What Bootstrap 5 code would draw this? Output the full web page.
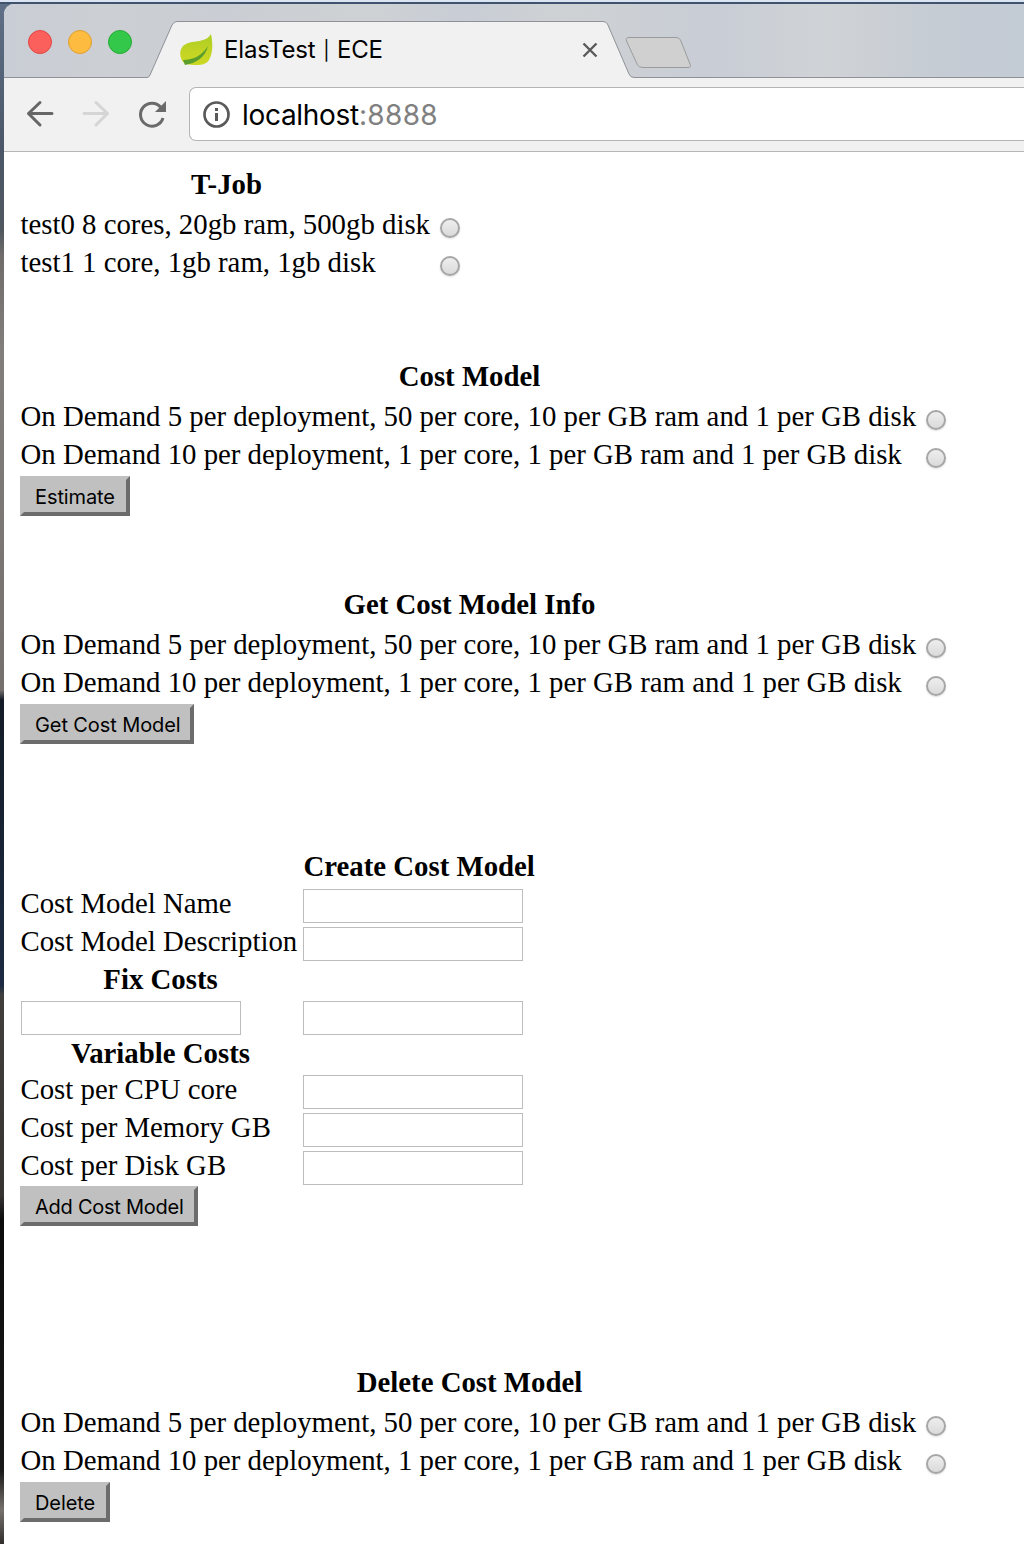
<!DOCTYPE html>
<html lang="en">
<head>
<meta charset="utf-8">
<title>ElasTest | ECE</title>
<link href="https://cdn.jsdelivr.net/npm/bootstrap@5.3.0/dist/css/bootstrap.min.css" rel="stylesheet">
<style>
body{width:1024px;height:1544px;overflow:hidden;color:#000;padding-left:4px;background:linear-gradient(#5f7088 0,#4b5768 150px,#50575f 230px,#6f6c6b 255px,#827e7c 350px,#75706d 690px,#131b26 700px,#1c2b43 985px,#403f3d 995px,#363433 1195px,#0c0c0c 1220px,#181818 1470px,#77716d 1510px,#302f2e 1544px)}
.desk-top{height:4px;margin-left:-4px;background:#dae4f2;border-bottom:2px solid #40536c}
.app-window{height:1540px;background:#fff;border-radius:10px 0 0 0;overflow:hidden}
.tab-strip{height:74px;background:linear-gradient(90deg,#c9cdd5 0,#cccfd3 100px,#cacdd3 220px,#cfd2d4 360px,#c8cdd6 460px,#cfd2d4 560px,#c8cdd6 710px,#d0d3d6 820px,#c6ccd4 930px,#c3cbd4 1020px)}
.tab-shape{left:0;top:0}
.lights{width:176px;padding-left:24px;gap:16px;padding-top:2px}
.light{width:24px;height:24px;border-radius:50%;border:1px solid}
.l-red{background:#fc605c;border-color:#df4744}
.l-yel{background:#fdbc40;border-color:#de9f34}
.l-grn{background:#34c84a;border-color:#27aa35}
.tab-content-row{padding-top:18px}
.tab-title{font:24px/30px Inter,sans-serif;letter-spacing:-.15px;margin-left:11px;width:358px}
.bar-sep{font-size:19px;padding:0 1px;vertical-align:1px}
.toolbar{height:74px;background:#f1f1f1;border-bottom:1px solid #b6b6b6}
.nav-icons{width:185px}
.omnibox{height:54px;background:#fff;border:1px solid #b5b5b5;border-right:0;border-radius:7px 0 0 7px;padding-left:12px;margin-top:-1px}
.address{font:28px/36px Inter,sans-serif;margin-left:12px;letter-spacing:-.3px;padding-top:2px}
.port{color:#808080;letter-spacing:.35px}
.page{padding:12px 0 0 16px;font-family:"Liberation Serif",serif;font-size:28.8px}
.w-job{width:444px}.w-model{width:930px}
.head-line{height:42px;line-height:41px;text-align:center;font-weight:700}
.w-job .head-line{width:413px}.w-model .head-line{width:899px}
.option{height:38px;line-height:37px;white-space:nowrap;padding-bottom:2px}
.option span,.cap-col{text-indent:.5px}
.form-check-input.pick{width:20px;height:20px;margin:7px 4px 0 0;border:2px solid #a6a6a6;background:linear-gradient(#eee,#dadada);box-shadow:0 1px 2px #ddd;flex:none}
.action{height:40px;border-style:solid;border-width:0 4px 4px 0;border-color:#6c6c6c;background:#c0c0c0;border-radius:0;padding:2px 0 0 15px;font:20px/38px Inter,sans-serif;letter-spacing:-.1px;color:#000;text-align:left;margin-top:2px;display:block;position:relative;white-space:nowrap}
.action::after{content:"";position:absolute;right:-4px;top:0;border-left:4px solid #c0c0c0;border-bottom:4px solid transparent}
.action::before{content:"";position:absolute;left:0;bottom:-4px;border-top:4px solid #c0c0c0;border-right:4px solid transparent}
.b-est{width:110px}.b-get{width:174px}.b-add{width:178px;margin-top:-1px;letter-spacing:-.25px}.b-del{width:90px}
.sec-model{margin-top:74px}.sec-info{margin-top:68px}.sec-create{margin-top:104px}.sec-del{margin-top:136px}
.field-row{height:38px;line-height:32px;white-space:nowrap}
.cap-col{width:283px;flex:none}
.sub-head{height:36px;line-height:32px;width:281px;text-align:center;font-weight:700}
.create-head{height:39px;line-height:36px;margin-left:283.5px;font-weight:700}
.form-control.entry{width:220px;height:34px;border:1px solid #bdbdbd;border-radius:0;padding:2px;margin-top:2px}
.cap-col .entry{margin-left:1px}
</style>
<script src="https://cdn.jsdelivr.net/npm/bootstrap@5.3.0/dist/js/bootstrap.bundle.min.js"></script>
</head>
<body>
<div class="desk-top"></div>
<div class="app-window">
  <header>
    <div class="tab-strip position-relative">
      <svg class="tab-shape position-absolute" width="1020" height="74" fill="none">
        <path d="M0 74V73.500H143Q145 73.500 146 71L168 21Q170 17.500 173 17.500H599Q602 17.500 603.500 20L625 70Q626.500 73.500 630 73.500H1020V74Z" fill="#f1f1f1"/>
        <path d="M0 73.500H143Q145 73.500 146 71L168 21Q170 17.500 173 17.500H599Q602 17.500 603.500 20L625 70Q626.500 73.500 630 73.500H1020" stroke="#8e9196"/>
        <path d="M625 33.500H672Q675 33.500 676.500 36L686 60Q687.500 63.500 684 63.500H639Q635 63.500 633.500 61L622.500 37Q621 33.500 625 33.500Z" fill="#d0d0d0" stroke="#999b9d"/>
      </svg>
      <div class="d-flex position-relative h-100">
        <div class="lights d-flex align-items-center h-100"><span class="light l-red"></span><span class="light l-yel"></span><span class="light l-grn"></span></div>
        <div class="tab-content-row d-flex align-items-center h-100">
          <svg width="33" height="32" viewBox="0 0 33 32">
            <defs><linearGradient id="leaf" x2="0" y2="1"><stop stop-color="#a9ce24"/><stop offset=".6" stop-color="#c4d424"/><stop offset="1" stop-color="#cbd822"/></linearGradient></defs>
            <path d="M31 0C33 9 33 19 29 26C25 33 13 31 5 30C-2 24-1 13 6 10C14 6 26 9 31 0Z" fill="url(#leaf)"/>
            <path d="M28 12C22 21 14 26 3 26L5 31C16 29 25 24 28 12Z" fill="#5c9e2b"/>
          </svg>
          <div class="tab-title">ElasTest <span class="bar-sep">|</span> ECE</div>
          <svg width="16" height="16" viewBox="0 0 16 16" stroke="#5a5a5a" stroke-width="2.400"><path d="M1.500 1.500L14.500 14.500M14.500 1.500L1.500 14.500"/></svg>
        </div>
      </div>
    </div>
    <div class="toolbar d-flex align-items-center">
      <svg class="nav-icons flex-shrink-0" height="74" viewBox="0 0 185 74" fill="none" stroke-width="3" stroke-linecap="round" stroke-linejoin="round">
        <path d="M48 35.500H24.500M36 24.500L24.500 35.500L36 47" stroke="#666"/>
        <path d="M80 35.500H103.500M92 24.500L103.500 35.500L92 47" stroke="#d5d5d5"/>
        <path d="M157 29.500A11.500 11.500 0 1 0 159 40" stroke="#6a6a6a" stroke-linecap="butt"/>
        <path d="M162 23V34H151Z" fill="#6a6a6a"/>
      </svg>
      <div class="omnibox d-flex align-items-center flex-grow-1">
        <svg width="28" height="28" viewBox="0 0 28 28"><circle cx="14.500" cy="14.500" r="12" fill="none" stroke="#5a5a5a" stroke-width="2.700"/><path d="M13 8h3v3h-3zM13 13h3v8h-3z" fill="#5a5a5a"/></svg>
        <div class="address">localhost<span class="port">:8888</span></div>
      </div>
    </div>
  </header>
  <main class="page">
    <section class="w-job">
      <div class="head-line">T-Job</div>
      <label class="option d-flex justify-content-between align-items-center"><span>test0 8 cores, 20gb ram, 500gb disk</span><input class="form-check-input pick" type="radio" name="job"></label>
      <label class="option d-flex justify-content-between align-items-center"><span>test1 1 core, 1gb ram, 1gb disk</span><input class="form-check-input pick" type="radio" name="job"></label>
    </section>
    <section class="w-model sec-model">
      <div class="head-line">Cost Model</div>
      <label class="option d-flex justify-content-between align-items-center"><span>On Demand 5 per deployment, 50 per core, 10 per GB ram and 1 per GB disk</span><input class="form-check-input pick" type="radio" name="model"></label>
      <label class="option d-flex justify-content-between align-items-center"><span>On Demand 10 per deployment, 1 per core, 1 per GB ram and 1 per GB disk</span><input class="form-check-input pick" type="radio" name="model"></label>
      <button class="btn action b-est">Estimate</button>
    </section>
    <section class="w-model sec-info">
      <div class="head-line">Get Cost Model Info</div>
      <label class="option d-flex justify-content-between align-items-center"><span>On Demand 5 per deployment, 50 per core, 10 per GB ram and 1 per GB disk</span><input class="form-check-input pick" type="radio" name="info"></label>
      <label class="option d-flex justify-content-between align-items-center"><span>On Demand 10 per deployment, 1 per core, 1 per GB ram and 1 per GB disk</span><input class="form-check-input pick" type="radio" name="info"></label>
      <button class="btn action b-get">Get Cost Model</button>
    </section>
    <section class="sec-create">
      <div class="create-head">Create Cost Model</div>
      <div class="field-row d-flex"><div class="cap-col">Cost Model Name</div><input class="form-control entry"></div>
      <div class="field-row d-flex"><div class="cap-col">Cost Model Description</div><input class="form-control entry"></div>
      <div class="sub-head">Fix Costs</div>
      <div class="field-row d-flex"><div class="cap-col"><input class="form-control entry"></div><input class="form-control entry"></div>
      <div class="sub-head">Variable Costs</div>
      <div class="field-row d-flex"><div class="cap-col">Cost per CPU core</div><input class="form-control entry"></div>
      <div class="field-row d-flex"><div class="cap-col">Cost per Memory GB</div><input class="form-control entry"></div>
      <div class="field-row d-flex"><div class="cap-col">Cost per Disk GB</div><input class="form-control entry"></div>
      <button class="btn action b-add">Add Cost Model</button>
    </section>
    <section class="w-model sec-del">
      <div class="head-line">Delete Cost Model</div>
      <label class="option d-flex justify-content-between align-items-center"><span>On Demand 5 per deployment, 50 per core, 10 per GB ram and 1 per GB disk</span><input class="form-check-input pick" type="radio" name="del"></label>
      <label class="option d-flex justify-content-between align-items-center"><span>On Demand 10 per deployment, 1 per core, 1 per GB ram and 1 per GB disk</span><input class="form-check-input pick" type="radio" name="del"></label>
      <button class="btn action b-del">Delete</button>
    </section>
  </main>
</div>
</body>
</html>
